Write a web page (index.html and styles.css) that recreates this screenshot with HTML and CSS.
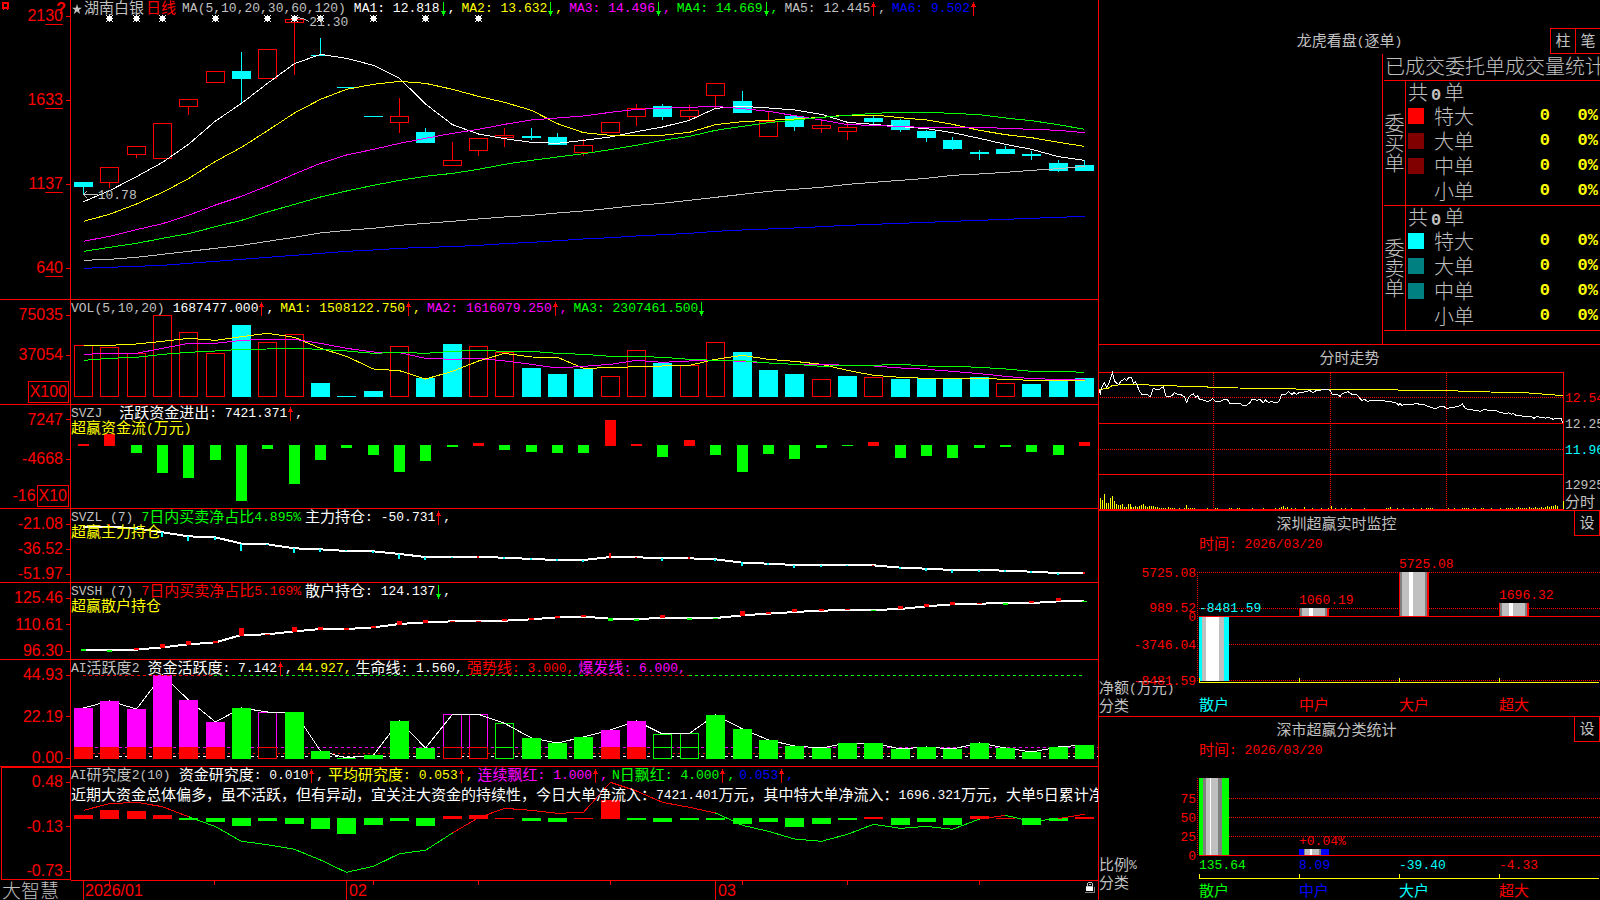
FILE: index.html
```html
<!DOCTYPE html>
<html lang="zh-CN">
<head>
<meta charset="utf-8">
<title>湖南白银 日线 - 大智慧</title>
<link rel="stylesheet" href="styles.css">
</head>
<body>
<svg class="defs" aria-hidden="true">
  <symbol id="up" viewBox="0 0 8 14"><path fill="#f00" d="M3 0h1v14h-1zM2 2h3v2h-3zM1 4h5v1h-5z"/></symbol>
  <symbol id="down" viewBox="0 0 8 14"><path fill="#0f0" d="M3 0h1v14h-1zM2 10h3v2h-3zM1 9h5v1h-5z"/></symbol>
</svg>
<div class="app">
  <main class="charts">
    <section class="panel price">
      <div class="axis">
        <svg class="mark" viewBox="0 0 8 8"><path fill="#f00" fill-rule="evenodd" d="M0 0h7v7h-1v1h-1v-1h-3v1h-1v-1h-1zM2 2v3h3v-3z"/></svg>
        <span class="help">?</span>
        <span class="tick">21<u>30</u></span><span class="tick">16<u>33</u></span><span class="tick">11<u>37</u></span><span class="tick">6<u>40</u></span>
      </div>
      <div class="plot">
        <svg id="price" viewBox="71 0 1027 299" preserveAspectRatio="none"></svg>
        <div class="legend">
          <p class="row averages">
            <span class="name"><svg class="star" viewBox="0 0 10 10"><path fill="#c0c0c0" d="M5 0l1.2 3.8H10L7 6l1.2 4L5 7.6 1.800 10 3 6 0 3.800h3.800z"/></svg><b class="cj">湖南白银</b><b class="cj red">日线</b></span>
            <span class="params">MA(5,10,20,30,60,120)</span>
            <span class="item white">MA1: 12.818<svg><use href="#down"/></svg>,</span>
            <span class="item yellow">MA2: 13.632<svg><use href="#down"/></svg>,</span>
            <span class="item magenta">MA3: 14.496<svg><use href="#down"/></svg>,</span>
            <span class="item green">MA4: 14.669<svg><use href="#down"/></svg>,</span>
            <span class="item">MA5: 12.445<svg><use href="#up"/></svg>,</span>
            <span class="item blue">MA6: 9.502<svg><use href="#up"/></svg></span>
          </p>
        </div>
        <span class="note high">21.30</span>
        <span class="note low">10.78</span>
      </div>
    </section>

    <section class="panel">
      <div class="axis scaled">
        <span class="tick">75035</span><span class="tick">37054</span><span class="tick unit"><i>X100</i></span>
      </div>
      <div class="plot">
        <svg id="volume" viewBox="71 300 1027 104" preserveAspectRatio="none"></svg>
        <div class="legend">
          <p class="row averages">
            <span class="params">VOL(5,10,20)</span>
            <span class="item white">1687477.000<svg><use href="#up"/></svg>,</span>
            <span class="item yellow">MA1: 1508122.750<svg><use href="#up"/></svg>,</span>
            <span class="item magenta">MA2: 1616079.250<svg><use href="#up"/></svg>,</span>
            <span class="item green">MA3: 2307461.500<svg><use href="#down"/></svg></span>
          </p>
        </div>
      </div>
    </section>

    <section class="panel">
      <div class="axis scaled">
        <span class="tick">7247</span><span class="tick">-4668</span><span class="tick unit">-16<i>X10</i></span>
      </div>
      <div class="plot">
        <svg id="flow" viewBox="71 405 1027 103" preserveAspectRatio="none"></svg>
        <div class="legend">
          <p class="row"><span class="params wide">SVZJ</span>
            <span class="item white"><b class="cj">活跃资金进出</b>: 7421.371<svg><use href="#up"/></svg>,</span></p>
          <p class="row yellow"><span><b class="cj">超赢资金流</b>(<b class="cj">万元</b>)</span></p>
        </div>
      </div>
    </section>

    <section class="panel">
      <div class="axis"><span class="tick">-21.08</span><span class="tick">-36.52</span><span class="tick">-51.97</span></div>
      <div class="plot">
        <svg id="main-hold" viewBox="71 509 1027 73" preserveAspectRatio="none"></svg>
        <div class="legend">
          <p class="row"><span class="params">SVZL (7)</span>
            <span class="item green">7<b class="cj">日内买卖净占比</b>4.895%</span>
            <span class="item white"><b class="cj">主力持仓</b>: -50.731<svg><use href="#up"/></svg>,</span></p>
          <p class="row yellow"><b class="cj">超赢主力持仓</b></p>
        </div>
      </div>
    </section>

    <section class="panel">
      <div class="axis"><span class="tick">125.46</span><span class="tick">110.61</span><span class="tick">96.30</span></div>
      <div class="plot">
        <svg id="retail-hold" viewBox="71 583 1027 76" preserveAspectRatio="none"></svg>
        <div class="legend">
          <p class="row"><span class="params">SVSH (7)</span>
            <span class="item red">7<b class="cj">日内买卖净占比</b>5.169%</span>
            <span class="item white"><b class="cj">散户持仓</b>: 124.137<svg><use href="#down"/></svg>,</span></p>
          <p class="row yellow"><b class="cj">超赢散户持仓</b></p>
        </div>
      </div>
    </section>

    <section class="panel">
      <div class="axis"><span class="tick">44.93</span><span class="tick">22.19</span><span class="tick">0.00</span></div>
      <div class="plot">
        <svg id="activity" viewBox="71 660 1027 106" preserveAspectRatio="none"></svg>
        <div class="legend">
          <p class="row"><span class="params">AI<b class="cj">活跃度</b>2</span>
            <span class="item white"><b class="cj">资金活跃度</b>: 7.142<svg><use href="#up"/></svg>,</span>
            <span class="item yellow">44.927,</span>
            <span class="item white"><b class="cj">生命线</b>: 1.560,</span>
            <span class="item red"><b class="cj">强势线</b>: 3.000,</span>
            <span class="item magenta"><b class="cj">爆发线</b>: 6.000,</span></p>
        </div>
      </div>
    </section>

    <section class="panel">
      <div class="axis selected"><span class="tick">0.48</span><span class="tick">-0.13</span><span class="tick">-0.73</span></div>
      <div class="plot">
        <svg id="research" viewBox="71 767 1027 113" preserveAspectRatio="none"></svg>
        <div class="legend">
          <p class="row"><span class="params">AI<b class="cj">研究度</b>2(10)</span>
            <span class="item white"><b class="cj">资金研究度</b>: 0.010<svg><use href="#up"/></svg>,</span>
            <span class="item yellow"><b class="cj">平均研究度</b>: 0.053<svg><use href="#up"/></svg>,</span>
            <span class="item magenta"><b class="cj">连续飘红</b>: 1.000<svg><use href="#up"/></svg>,</span>
            <span class="item green">N<b class="cj">日飘红</b>: 4.000<svg><use href="#up"/></svg>,</span>
            <span class="item blue">0.053<svg><use href="#up"/></svg>,</span></p>
          <p class="row comment white"><span><b class="cj">近期大资金总体偏多，虽不活跃，但有异动，宜关注大资金的持续性，今日大单净流入：</b>7421.401<b class="cj">万元，其中特大单净流入：</b>1696.321<b class="cj">万元，大单</b>5<b class="cj">日累计净流入</b></span></p>
        </div>
      </div>
    </section>

    <footer class="time">
      <span class="brand">大智慧</span>
      <div class="plot">
        <svg id="time" viewBox="71 881 1027 19" preserveAspectRatio="none"></svg>
        <div class="months"><span>2026/01</span><span>02</span><span>03</span></div>
        <svg class="lock" viewBox="0 0 10 12"><path fill="#c0c0c0" d="M3 0h4v1h-4zM2 1h1v3h-1zM7 1h1v3h-1zM4 2h2v1h-2z"/><path fill="#fff" d="M1 4h7v5h-7z"/><path fill="#c0c0c0" d="M1 4h7v1h-7z"/><path fill="#808080" d="M9 5h1v6h-10v-1h9z"/></svg>
      </div>
    </footer>
  </main>

  <aside class="side">
    <section class="orders">
      <header class="orders-head">
        <h2><b class="cj">龙虎看盘</b>(<b class="cj">逐单</b>)</h2>
        <div class="actions"><button type="button">柱</button><button type="button">笔</button></div>
      </header>
      <div class="orders-body">
        <h3>已成交委托单成交量统计</h3>
        <table>
          <colgroup><col class="c-side"><col class="c-swatch"><col class="c-kind"><col class="c-count"><col class="c-pct"></colgroup>
          <tbody>
            <tr><th rowspan="5" scope="rowgroup">委<br>买<br>单</th><td colspan="4" class="total">共<b>0</b>单</td></tr>
            <tr><td><i class="swatch buy-xl"></i></td><td>特大</td><td class="n">0</td><td class="n pct">0%</td></tr>
            <tr><td><i class="swatch buy"></i></td><td>大单</td><td class="n">0</td><td class="n pct">0%</td></tr>
            <tr><td><i class="swatch buy"></i></td><td>中单</td><td class="n">0</td><td class="n pct">0%</td></tr>
            <tr><td></td><td>小单</td><td class="n">0</td><td class="n pct">0%</td></tr>
          </tbody>
          <tbody>
            <tr><th rowspan="5" scope="rowgroup">委<br>卖<br>单</th><td colspan="4" class="total">共<b>0</b>单</td></tr>
            <tr><td><i class="swatch sell-xl"></i></td><td>特大</td><td class="n">0</td><td class="n pct">0%</td></tr>
            <tr><td><i class="swatch sell"></i></td><td>大单</td><td class="n">0</td><td class="n pct">0%</td></tr>
            <tr><td><i class="swatch sell"></i></td><td>中单</td><td class="n">0</td><td class="n pct">0%</td></tr>
            <tr><td></td><td>小单</td><td class="n">0</td><td class="n pct">0%</td></tr>
          </tbody>
        </table>
      </div>
    </section>

    <section class="intraday">
      <h2 class="cj">分时走势</h2>
      <div class="intraday-body">
        <svg id="intraday" viewBox="1099 371 465 139" preserveAspectRatio="none"></svg>
        <div class="levels">
          <span class="red">12.54</span><span>12.25</span><span class="cyan">11.96</span><span>12925</span><span class="cj">分时</span>
        </div>
      </div>
    </section>

    <section class="stat amount">
      <header><h2 class="cj">深圳超赢实时监控</h2><button type="button">设</button></header>
      <p class="date"><b class="cj">时间</b>: 2026/03/20</p>
      <div class="stat-body">
        <div class="scale" id="amount-scale"><span><b class="cj">净额</b>(<b class="cj">万元</b>)</span><span class="cj">分类</span></div>
        <div class="stat-plot">
          <div class="bars" id="amount-labels"><svg id="amount" viewBox="1197 552 403 145" preserveAspectRatio="none"></svg></div>
          <div class="cats"><span class="cyan">散户</span><span class="red">中户</span><span class="red">大户</span><span class="red">超大</span></div>
        </div>
      </div>
    </section>

    <section class="stat ratio">
      <header><h2 class="cj">深市超赢分类统计</h2><button type="button">设</button></header>
      <p class="date"><b class="cj">时间</b>: 2026/03/20</p>
      <div class="stat-body">
        <div class="scale" id="ratio-scale"><span><b class="cj">比例</b>%</span><span class="cj">分类</span></div>
        <div class="stat-plot">
          <div class="bars" id="ratio-labels"><svg id="ratio" viewBox="1197 758 403 125" preserveAspectRatio="none"></svg></div>
          <div class="cats"><span class="green">散户</span><span class="blue">中户</span><span class="cyan">大户</span><span class="red">超大</span></div>
        </div>
      </div>
    </section>
  </aside>
</div>
<script src="charts.js"></script>
</body>
</html>
```

FILE: styles.css
```css
* { box-sizing: border-box; margin: 0; padding: 0; }

:root {
  --cjk: "Noto Sans CJK SC", sans-serif;
  --mono: "Liberation Mono", "Noto Sans CJK SC", monospace;
  --line: #f00;
}

body {
  background: #000;
  color: #c0c0c0;
  font: 13px/15px var(--mono);
  height: 100vh;
  overflow: hidden;
}

h2, h3, b { font-weight: 400; }
svg { display: block; }
.defs { position: absolute; width: 0; height: 0; }
.cj { font-family: var(--cjk); font-size: 15px; line-height: 15px; }
b.cj { margin-top: -4px; }

.white { color: #fff; }
.yellow { color: #ff0; }
.magenta { color: #f0f; }
.green { color: #0f0; }
.blue { color: #00f; }
.red { color: #f00; }
.cyan { color: #0ff; }

.app {
  display: grid;
  grid-template-columns: minmax(0, 1098fr) minmax(0, 502fr);
  grid-template-rows: minmax(0, 1fr);
  height: 100vh;
}

/* Left: stacked indicator panels */
.charts {
  display: grid;
  grid-template-rows:
    minmax(0, 300fr) minmax(0, 105fr) minmax(0, 104fr) minmax(0, 74fr)
    minmax(0, 77fr) minmax(0, 107fr) minmax(0, 114fr) minmax(0, 19fr);
  min-width: 0;
}
.panel {
  display: flex;
  border-bottom: 1px solid var(--line);
  min-height: 0;
}
.panel:nth-last-child(2) { border-bottom: 0; }
.panel:nth-last-child(2) .plot { border-bottom: 1px solid var(--line); }

.axis {
  flex: 0 0 71px;
  display: flex;
  flex-direction: column;
  justify-content: space-between;
  border-right: 1px solid var(--line);
  padding-top: 7px;
  color: #f00;
  font: 16px/18px "Liberation Sans", Arial, sans-serif;
}
.price .axis { position: relative; padding: 8px 0 23px; }
.axis.scaled {
  display: grid;
  grid-template-columns: 1fr;
  grid-template-rows: 30fr 50fr 24fr;
  align-items: center;
  justify-content: stretch;
  padding-top: 0;
}
.axis.selected {
  flex-basis: 70px;
  border: 1px solid var(--line);
  margin: 0 0 1px 1px;
  padding-top: 6px;
}
.tick {
  display: flex;
  align-items: center;
  justify-content: flex-end;
  height: 16px;
}
.tick::after {
  content: "";
  width: 4px;
  height: 1px;
  margin-left: 3px;
  background: #f00;
}
.tick u { text-underline-offset: 3px; text-decoration-thickness: 1px; }
.tick.unit { height: 22px; padding-right: 1px; }
.tick.unit::after { content: none; }
.tick i {
  font-style: normal;
  border: 1px solid var(--line);
  line-height: 20px;
  padding: 0 1px;
  margin-left: 1px;
}
.mark { position: absolute; left: 2px; top: 2px; width: 8px; height: 8px; }
.help { position: absolute; right: 4px; top: 0; font-weight: 700; }

.plot {
  flex: 1;
  display: grid;
  grid-template: minmax(0, 1fr) / minmax(0, 1fr);
  min-width: 0;
  min-height: 0;
  position: relative;
  overflow: hidden;
}
.plot > svg:first-child, .legend, .months { grid-area: 1 / 1; }
.plot > svg:first-child, #intraday, .bars > svg { width: 100%; height: 100%; }
svg [stroke] { vector-effect: non-scaling-stroke; shape-rendering: crispEdges; }
svg rect { shape-rendering: crispEdges; }

.legend { z-index: 1; white-space: nowrap; padding-top: 1px; }
.row { display: flex; gap: 4px; height: 15px; align-items: center; }
.row.averages { gap: 6px; }
.row > span { flex: none; display: flex; align-items: center; }
.row .item { white-space: pre; }
.params { margin-right: 4px; white-space: pre; }
.averages .params { margin-right: 2px; }
.params.wide { margin-right: 13px; }
.item svg { width: 8px; height: 14px; }
.name { gap: 2px; margin-left: 1px; }
.star { width: 10px; height: 10px; }
.comment { margin-top: 5px; }
.note { position: absolute; z-index: 1; }
.note.high { left: 23.2%; top: 5%; }
.note.low { left: 2.6%; top: 63%; }

.time { display: flex; min-height: 0; }
.brand {
  flex: 0 0 71px;
  padding-left: 2px;
  font: 300 19px/17px var(--cjk);
}
.months {
  display: grid;
  grid-template-columns: 264fr 369fr 380fr;
  padding-left: 14px;
  color: #f00;
  font: 16px/19px "Liberation Sans", Arial, sans-serif;
}
.lock { position: absolute; right: 3px; top: 1px; width: 10px; height: 12px; }

/* Right: order and statistics panels */
.side {
  display: grid;
  grid-template-rows: minmax(0, 345fr) minmax(0, 166fr) minmax(0, 206fr) minmax(0, 183fr);
  border-left: 1px solid var(--line);
  min-width: 0;
}
.side > section { border-bottom: 1px solid var(--line); min-height: 0; overflow: hidden; }
.side > section:last-child { border-bottom: 0; }
.side h2 { font-size: 13px; text-align: center; white-space: nowrap; }
.side h2.cj, .side h2 .cj { font-size: 15px; }
.side button {
  width: 26px;
  height: 26px;
  border: 1px solid var(--line);
  background: #000;
  color: #c0c0c0;
  font: 15px/20px var(--cjk);
  padding-bottom: 2px;
}

.orders { display: flex; flex-direction: column; padding-top: 28px; }
.orders-head {
  display: grid;
  grid-template-columns: 1fr auto 1fr;
  align-items: center;
}
.orders-head h2 { grid-column: 2; display: flex; align-items: center; }
.actions { display: flex; justify-content: flex-end; margin-right: -1px; }
.actions button + button { margin-left: -1px; }
.orders-body {
  flex: 1;
  width: 218px;
  margin-left: auto;
  border-left: 1px solid var(--line);
  padding-left: 1px;
  overflow: hidden;
}
.orders h3 {
  font: 300 20px/24px var(--cjk);
  padding: 0 0 2px 1px;
  white-space: nowrap;
}
table {
  width: 100%;
  table-layout: fixed;
  border-spacing: 0;
  border-bottom: 1px solid var(--line);
  font: 300 20px/20px var(--cjk);
}
tr { height: 25px; }
tr:first-child > * { border-top: 1px solid var(--line); }
th {
  border-right: 1px solid var(--line);
  font-weight: 300;
}
td { height: 25px; padding: 0 0 3px; vertical-align: middle; white-space: nowrap; }
.c-side { width: 22px; }
.c-swatch { width: 28px; }
.c-kind { width: 60px; }
.c-count { width: 56px; }
.c-pct { width: 50px; }
td.total { padding: 0 0 2px 2px; line-height: 20px; }
.total b { font: 700 17px/0 var(--mono); padding: 0 3px; }
.n { text-align: right; color: #ff0; font: 700 17px/20px var(--mono); }
td.pct { padding-right: 2px; }
.swatch { display: block; width: 16px; height: 16px; margin-left: 2px; }
.buy-xl { background: #f00; }
.buy { background: #800000; }
.sell-xl { background: #0ff; }
.sell { background: #008080; }

.intraday { display: flex; flex-direction: column; }
.side .intraday h2 { line-height: 24px; padding-bottom: 2px; }
.intraday-body { flex: 1; display: flex; min-height: 0; }
.intraday-body > svg { flex: 465 0 0; min-width: 0; }
.levels {
  flex: 36 0 0;
  min-width: 0;
  overflow: hidden;
  display: grid;
  grid-template-rows: 40fr 26fr 26fr 30fr 16fr;
  align-items: end;
  text-indent: 1px;
  white-space: nowrap;
}
.levels > :nth-child(-n+3) { padding-bottom: 5px; }
.levels > :last-child { padding-bottom: 2px; }

.stat { display: flex; flex-direction: column; }
.stat header { display: flex; align-items: center; height: 25px; }
.stat header h2 { flex: 1; padding-bottom: 2px; }
.stat header button { margin-top: -1px; }
.date { color: #f00; padding-left: 100px; height: 16px; display: flex; align-items: center; white-space: pre; }
.stat-body { flex: 1; display: grid; grid-template-columns: 98fr 403fr; min-height: 0; }
.scale {
  position: relative;
  display: flex;
  flex-direction: column;
  justify-content: flex-end;
  white-space: nowrap;
}
.scale > span { display: flex; align-items: center; height: 16px; }
.scale .level { position: absolute; right: 1px; color: #f00; transform: translateY(-50%); }
.amount .scale { padding-bottom: 4px; }
.ratio .scale { padding-bottom: 11px; }
.stat-plot { display: flex; flex-direction: column; min-width: 0; min-height: 0; }
.bars { position: relative; flex: 1; min-height: 0; }
.bars .value { position: absolute; transform: translateY(-50%); }
.cats {
  display: grid;
  grid-template-columns: repeat(4, 1fr);
  padding: 0 1px 5px 2px;
  font: 15px/14px var(--cjk);
}
.ratio .cats { padding-bottom: 3px; }
```

FILE: charts.js
```js
const NS = "http://www.w3.org/2000/svg";
const R = "#f00", G = "#0f0", C = "#0ff", M = "#f0f", Y = "#ff0", W = "#fff", S = "#c0c0c0", B = "#00f", D = "#808080";
const FIRST = 83, STEP = 26.34;
const colX = i => Math.round(FIRST + STEP * i);
const $ = id => document.getElementById(id);

function add(svg, tag, attrs) {
  const node = document.createElementNS(NS, tag);
  for (const k in attrs) node.setAttribute(k, attrs[k]);
  svg.appendChild(node);
}
const fill = (svg, x, y, w, h, color) => add(svg, "rect", { x, y, width: w, height: h, fill: color });
const box = (svg, x, y, w, h, color, bg = "#000") =>
  add(svg, "rect", { x: x + 0.5, y: y + 0.5, width: w - 1, height: Math.max(h - 1, 0.01), fill: bg, stroke: color });
const path = (svg, pts, color, width = 1, dash) =>
  add(svg, "polyline", Object.assign({ points: pts.map(p => p.join()).join(" "), fill: "none", stroke: color, "stroke-width": width }, dash ? { "stroke-dasharray": dash } : {}));
const hline = (svg, x1, x2, y, color, dash) => path(svg, [[x1, y + 0.5], [x2, y + 0.5]], color, 1, dash);
const vline = (svg, x, y1, y2, color, dash) => path(svg, [[x + 0.5, y1], [x + 0.5, y2]], color, 1, dash);

/* Series are stored in thirds of a chart unit. */
const series = (svg, base, vals, color, width) =>
  path(svg, vals.map((v, i) => [colX(i) + 0.5, base + v / 3]), color, width);
const at = (base, v) => Math.round(base + v / 3);

/* Price: [kind, body top, body bottom, high, low] */
const candles = [
  ["c",182,187,182,195],["r",167,183,167,188],["r",146,155,146,158],["r",123,159],["r",99,107,99,115],
  ["r",71,83],["c",71,79,52,103],["r",49,79],["r",19,23,19,75],["c",55,56,38,56],["c",87,88],["c",116,117],
  ["r",116,123,98,133],["c",132,143,128,143],["r",160,166,142,166],["r",138,151,138,156],["r",135,138,128,147],
  ["c",136,138,128,140],["c",137,145,133,145],["r",145,153,139,156],["r",122,133],["r",108,117,104,126],
  ["c",106,117,104,120],["r",110,117,105,120],["r",83,96,83,108],["c",101,113,91,113],["r",121,137,111,137],
  ["c",116,127,116,131],["r",125,129,120,133],["r",127,132,123,140],["c",118,122,115,124],["c",120,130,119,132],
  ["c",131,138,130,142],["c",140,149,137,150],["c",152,154,150,160],["c",149,154,146,154],["c",154,156,151,160],
  ["c",163,171,160,172],["c",165,171,160,171]];
const price = $("price");
candles.forEach(([k, t, b, h, l], i) => {
  const x = colX(i), color = k === "c" ? C : R;
  if (h !== undefined) fill(price, x, h, 1, l - h, color);
  k === "c" ? fill(price, x - 9, t, 19, b - t, C) : box(price, x - 9, t, 19, b - t, R);
});
fill(price, colX(8), 19, 1, 56, R);
series(price, 0, [805,802,799,796,790,784,778,772,766,760,754,750,745,742,740,736,731,727,722,717,713,708,704,700,694,690,687,684,680,676,673,670,667,664,661,658,655,652,649], B);
series(price, 0, [781,778,772,763,754,745,736,724,712,699,691,685,676,670,664,657,651,646,639,633,625,616,610,601,592,583,574,568,562,553,547,541,535,526,522,517,511,506,499], S);
series(price, 0, [605,572,530,487,433,363,310,250,191,163,175,196,235,312,374,402,416,427,430,421,411,395,381,361,325,319,324,330,343,367,373,380,386,398,415,433,448,470,481], W);
series(price, 0, [664,643,612,577,536,484,442,392,339,298,268,253,244,250,268,289,307,331,371,398,406,406,406,397,374,365,361,357,352,345,345,353,360,373,391,404,413,427,439], Y);
series(price, 0, [724,709,689,671,646,615,589,558,522,490,465,448,430,415,400,388,373,360,354,348,337,328,325,322,319,326,334,347,360,374,376,380,382,382,382,385,388,391,398], M);
series(price, 0, [754,742,730,715,701,680,661,636,613,591,573,556,541,529,520,508,493,481,471,461,449,436,421,409,391,379,368,360,352,346,340,337,337,340,344,354,362,374,388], G);
[1,2,3,5,7,8,9,11,13,15].forEach(i => {
  const x = colX(i);
  fill(price, x - 2, 16, 5, 5, W);
  fill(price, x, 15, 1, 7, W);
  fill(price, x - 3, 18, 7, 1, W);
  [[-3,15],[3,15],[-3,21],[3,21]].forEach(([dx, y]) => fill(price, x + dx, y, 1, 1, W));
});
path(price, [[297,17.5],[303,18.5],[309,21.5]], S);
path(price, [[84,194.5],[98,194.5]], S);
path(price, [[87,191],[84,194.5],[87,198]], S);

/* Volume */
const volume = $("volume");
const volTops = [151,156,174,61,111,174,90,142,118,264,303,288,154,249,147,153,171,219,237,222,243,165,204,210,141,171,225,237,252,243,246,252,250,249,246,264,267,255,249];
const volKinds = "rrrrrrcrrcccrccrrcccrrcrrcccrcrccccrccc";
volTops.forEach((v, i) => {
  const y = at(295, v);
  (volKinds[i] === "c" ? fill : box)(volume, colX(i) - 9, y, 19, 397 - y, volKinds[i] === "c" ? C : R);
});
series(volume, 295, [151,151,147,139,130,136,125,115,127,160,184,222,227,252,229,198,175,186,187,220,218,215,213,211,193,181,193,199,208,226,241,247,250,250,250,253,256,256,256], Y);
series(volume, 295, [178,175,175,160,145,145,136,133,133,145,160,171,173,190,193,190,198,208,219,214,208,196,202,198,196,199,204,208,208,211,213,219,223,229,236,244,251,253,253], M);
series(volume, 295, [196,190,187,178,172,168,163,162,160,163,168,175,172,175,169,166,169,169,175,178,184,184,187,193,196,197,204,208,214,211,211,208,213,214,217,222,229,229,232], G);

/* Signed bars around a zero line */
function signed(svg, base, zero, width, vals) {
  const half = (width - 1) / 2;
  vals.forEach((v, i) => {
    const up = v < 0, y = at(base, Math.abs(v)), z = at(base, zero);
    up ? fill(svg, colX(i) - half, y, width, z + 1 - y, R) : fill(svg, colX(i) - half, z, width, y - z, G);
  });
}
signed($("flow"), 295, 450, 11, [-447,-417,474,534,549,495,618,462,567,495,459,480,531,498,456,-444,465,471,474,474,-375,-447,486,-435,480,531,477,492,459,453,-441,489,483,489,459,456,471,480,-441]);

/* Holdings: line plus daily change marks [index, top, bottom, colour] */
function marks(svg, base, width, list) {
  list.forEach(([i, t, b, color]) => fill(svg, colX(i) - Math.floor(width / 2), at(base, t), width, Math.max(at(base, b) - at(base, t), 1), color));
}
const mainHold = $("main-hold");
series(mainHold, 295, [697,695,700,712,724,727,746,748,760,763,768,769,777,786,786,786,788,792,795,795,786,787,789,790,793,803,806,810,810,810,811,818,821,825,825,827,830,834,834], W, 2);
marks(mainHold, 295, 2, [[1,687,693,R],[2,699,705,C],[3,712,726,C],[4,724,738,C],[5,727,735,C],[6,747,768,C],[7,747,750,C],[8,760,774,C],[9,763,771,C],[10,765,768,C],[11,768,774,C],[12,778,792,C],[13,787,795,C],[14,786,789,C],[15,783,789,R],[16,786,792,C],[17,789,795,C],[18,792,798,C],[19,795,801,C],[20,774,789,R],[21,785,789,R],[22,790,798,C],[23,786,792,R],[24,792,798,C],[25,802,813,C],[26,804,810,C],[27,810,819,C],[28,810,816,C],[29,810,813,C],[30,810,813,R],[31,816,822,C],[32,820,828,C],[33,825,834,C],[34,825,831,C],[35,825,831,C],[36,828,834,C],[37,834,840,C],[38,831,837,R]]);
const retail = $("retail-hold");
series(retail, 580, [210,210,209,202,193,187,165,163,154,147,147,142,132,127,124,124,122,118,112,110,116,117,114,114,114,106,101,96,92,90,90,87,79,73,71,69,69,64,63], W, 2);
marks(retail, 580, 5, [[0,207,213,G],[1,210,216,G],[2,204,210,R],[3,192,204,R],[4,183,195,R],[5,183,189,R],[6,144,168,R],[7,162,165,R],[8,141,156,R],[9,141,150,R],[10,144,149,R],[11,138,144,R],[12,123,135,R],[13,120,129,R],[14,123,126,R],[15,123,126,R],[16,117,123,R],[17,114,120,R],[18,108,114,R],[19,105,111,R],[20,114,123,G],[21,117,123,G],[22,105,114,R],[23,114,120,G],[24,114,117,G],[25,93,108,R],[26,95,102,R],[27,87,96,R],[28,87,93,R],[29,87,90,R],[30,90,93,G],[31,78,87,R],[32,72,81,R],[33,66,75,R],[34,69,72,R],[35,69,75,G],[36,63,69,R],[37,54,63,R],[38,63,66,G]]);

/* Activity: M solid magenta, m hollow magenta, G solid green, g hollow green */
const act = $("activity");
const actTops = [384,363,387,285,360,426,384,396,396,513,534,525,423,504,403,403,430,474,489,471,450,423,462,460,405,447,480,498,504,489,489,507,501,507,489,504,516,501,495];
const actKinds = "MMMMMMGmGGGGGGmmgGGGMMggGGGGGGGGGGGGGGG";
hline(act, 83, 1098, 747, M, "3 3");
hline(act, 83, 1098, 753, R, "2 3");
hline(act, 83, 1098, 756, W, "3 3");
actTops.forEach((v, i) => {
  const x = colX(i) - 9, y = at(580, v), k = actKinds[i];
  if (k === "m" || k === "g") {
    box(act, x, y, 19, 759 - y, k === "m" ? M : G);
    box(act, x, 747, 19, 12, k === "m" ? R : G);
  }
});
series(act, 580, actTops, W);
actTops.forEach((v, i) => {
  const x = colX(i) - 9, y = at(580, v), k = actKinds[i];
  if (k === "M") { fill(act, x, y, 19, 759 - y, M); fill(act, x, 747, 19, 12, R); }
  if (k === "G") fill(act, x, y, 19, 759 - y, G);
});
[[83,214,R],[214,585,G],[585,689,R],[689,1084,G]].forEach(([a, b, c]) => hline(act, a, b, 675, c, "3 3"));

/* Research */
const research = $("research");
signed(research, 580, 714, 19, [-705,-690,-693,-705,720,726,738,723,732,747,762,735,723,738,-708,-705,-714,723,726,-714,-660,720,726,720,720,732,726,741,732,720,-711,735,726,735,-708,-714,735,723,-711]);
const trend = [691,671,667,680,710,740,784,794,808,840,877,859,821,811,759,713,685,691,700,697,607,633,667,682,699,736,754,777,784,763,733,745,739,748,717,706,724,716,703];
[[0,4,R],[4,14,G],[14,24,R],[24,34,G],[34,35,R],[35,37,G],[37,38,R]].forEach(([a, b, c]) =>
  path(research, trend.slice(a, b + 1).map((v, i) => [colX(a + i) + 0.5, 580 + v / 3]), c));

/* Calendar ticks */
const time = $("time");
[83,346,715].forEach(x => fill(time, x, 881, 1, 19, R));
[109,214,373,478,610,742,847,979].forEach(x => fill(time, x, 881, 1, 4, R));

/* Intraday */
const intra = $("intraday");
const ix = z => 1090 + z / 3, iy = z => 340 + z / 3;
[372,423,474].forEach(y => hline(intra, 1099, 1564, y, R));
fill(intra, 1099, 509, 465, 1, R);
[397,449].forEach(y => hline(intra, 1100, 1563, y, R, "1 1"));
[1213,1330,1446].forEach(x => vline(intra, x, 373, 509, R, "1 1"));
vline(intra, 1563, 372, 510, R);
const pairs = s => s.split(" ").map(p => p.split(",").map(Number));
path(intra, pairs("27,150 40,147 56,144 66,137 92,134 165,134 200,137 260,138 345,140 360,142 445,144 600,146 650,149 925,150 1070,152 1200,156 1300,158 1350,161 1370,164 1420,166").map(([x, y]) => [ix(x), iy(y)]), Y);
path(intra, pairs("27,150 31,160 35,142 43,127 50,142 58,127 67,98 73,122 80,130 86,134 92,124 100,120 104,115 110,122 116,112 124,112 130,130 136,125 142,138 150,156 156,163 172,163 180,171 184,163 190,145 200,150 208,148 214,143 220,141 228,169 240,169 248,165 253,158 260,162 272,162 278,168 284,171 290,187 296,173 302,165 310,161 317,172 322,166 328,177 340,180 352,184 360,182 368,175 378,186 390,184 402,178 412,179 420,190 440,192 450,190 458,196 470,196 480,188 487,177 500,181 510,179 520,188 526,180 536,188 544,183 550,187 562,188 568,183 574,165 586,163 596,155 606,163 612,158 620,163 630,156 640,157 650,154 660,152 668,158 680,151 692,150 706,148 716,150 722,152 726,163 742,163 750,169 758,160 774,155 786,163 800,163 810,175 816,181 824,178 832,184 846,181 860,183 880,182 896,185 916,187 926,195 930,190 936,196 950,192 964,195 976,190 990,193 1004,194 1016,200 1036,206 1050,200 1064,201 1070,206 1080,203 1104,200 1117,192 1126,206 1140,209 1160,211 1170,214 1182,208 1206,213 1216,211 1230,218 1250,220 1256,218 1264,223 1270,221 1280,227 1310,229 1326,231 1332,235 1342,229 1352,234 1360,231 1366,235 1376,232 1390,238 1400,235 1414,236 1418,248").map(([x, y]) => [ix(x), iy(y)]), W);
pairs("31,11 37,9 43,15 49,6 55,6 61,11 67,13 73,8 79,5 85,4 91,4 97,5 103,2 109,2 115,5 121,5 124,2 130,2 136,3 142,2 148,3 154,4 160,5 166,3 172,2 178,3 184,3 190,3 196,2 202,2 208,1 214,1 220,1 226,1 235,2 241,1 247,1 253,1 268,1 283,1 290,4 296,1 302,1 308,1 314,1 352,1 376,1 382,1 418,1 424,1 442,1 448,1 487,1 520,1 556,1 568,1 574,2 580,3 586,1 592,2 604,1 616,1 643,2 667,1 694,1 715,1 724,3 736,1 754,1 766,1 784,1 823,1 889,1 895,1 901,2 922,1 940,1 970,1 994,1 1008,1 1014,1 1020,1 1026,1 1075,1 1093,1 1117,1 1123,1 1129,1 1135,1 1150,1 1156,1 1174,1 1180,1 1204,1 1231,1 1248,1 1254,1 1260,1 1266,1 1278,1 1285,2 1290,1 1296,1 1302,1 1308,1 1318,2 1324,1 1330,1 1336,2 1342,1 1348,1 1354,2 1360,1 1366,2 1372,3 1378,2 1384,3 1390,3 1396,4 1402,3 1420,8")
  .forEach(([x, h]) => fill(intra, Math.floor(ix(x)), 509 - h, 1, h, Y));

/* Category bars with cylinder shading: stripes are [offset, width, colour] */
function cylinder(svg, x, y, h, stripes) {
  stripes.forEach(([dx, w, c]) => fill(svg, x + dx, y, w, h, c));
}
function labels(host, cls, view, list) {
  list.forEach(([text, x, y, color]) => {
    const s = document.createElement("span");
    s.className = cls + " " + color;
    s.textContent = text;
    s.style.top = (y - view.y) / view.h * 100 + "%";
    if (x !== null) s.style.left = (x - view.x) / view.w * 100 + "%";
    host.appendChild(s);
  });
}
const yellowAxis = (svg, y) => {
  hline(svg, 1199, 1599, y, Y);
  [1199,1299,1399,1499].forEach(x => fill(svg, x, y - 4, 1, 4, Y));
};
const redTube = [[0,1,R],[1,2,D],[3,7,S],[10,4,W],[14,12,S],[26,2,D],[28,2,R]];

const amount = $("amount");
[572,608,644,680].forEach(y => hline(amount, 1197, 1600, y, R, "1 1"));
vline(amount, 1197, 572, 681, R, "1 1");
cylinder(amount, 1199, 617, 64, [[0,3,C],[3,4,S],[7,13,W],[20,5,S],[25,5,C]]);
cylinder(amount, 1299, 608, 8, redTube);
cylinder(amount, 1399, 572, 44, redTube);
cylinder(amount, 1499, 603, 13, redTube);
hline(amount, 1199, 1600, 616, R);
yellowAxis(amount, 682);
labels($("amount-scale"), "level", { y: 552, h: 164 }, [["5725.08",null,573,""],["989.52",null,609,""],["0",null,617,""],["-3746.04",null,645,""],["-8481.59",null,681,""]]);
labels($("amount-labels"), "value", { x: 1197, y: 552, w: 403, h: 145 }, [["-8481.59",1199,608,"cyan"],["1060.19",1299,600,"red"],["5725.08",1399,564,"red"],["1696.32",1499,595,"red"]]);

const ratio = $("ratio");
[798,817,836].forEach(y => hline(ratio, 1229, 1600, y, R, "1 1"));
vline(ratio, 1197, 778, 855, R, "1 1");
cylinder(ratio, 1199, 778, 77, [[0,4,G],[4,3,D],[7,4,S],[11,1,W],[12,7,S],[19,4,D],[23,7,G]]);
cylinder(ratio, 1299, 849, 6, [[0,5,B],[5,1,D],[6,5,S],[11,2,W],[13,7,S],[20,2,D],[22,8,B]]);
hline(ratio, 1199, 1600, 855, R);
yellowAxis(ratio, 878);
labels($("ratio-scale"), "level", { y: 758, h: 142 }, [["75",null,799,""],["50",null,818,""],["25",null,837,""],["0",null,856,""]]);
labels($("ratio-labels"), "value", { x: 1197, y: 758, w: 403, h: 125 }, [["+0.04%",1299,841,"red"],["135.64",1199,865,"green"],["8.09",1299,865,"blue"],["-39.40",1399,865,"cyan"],["-4.33",1499,865,"red"]]);
```
